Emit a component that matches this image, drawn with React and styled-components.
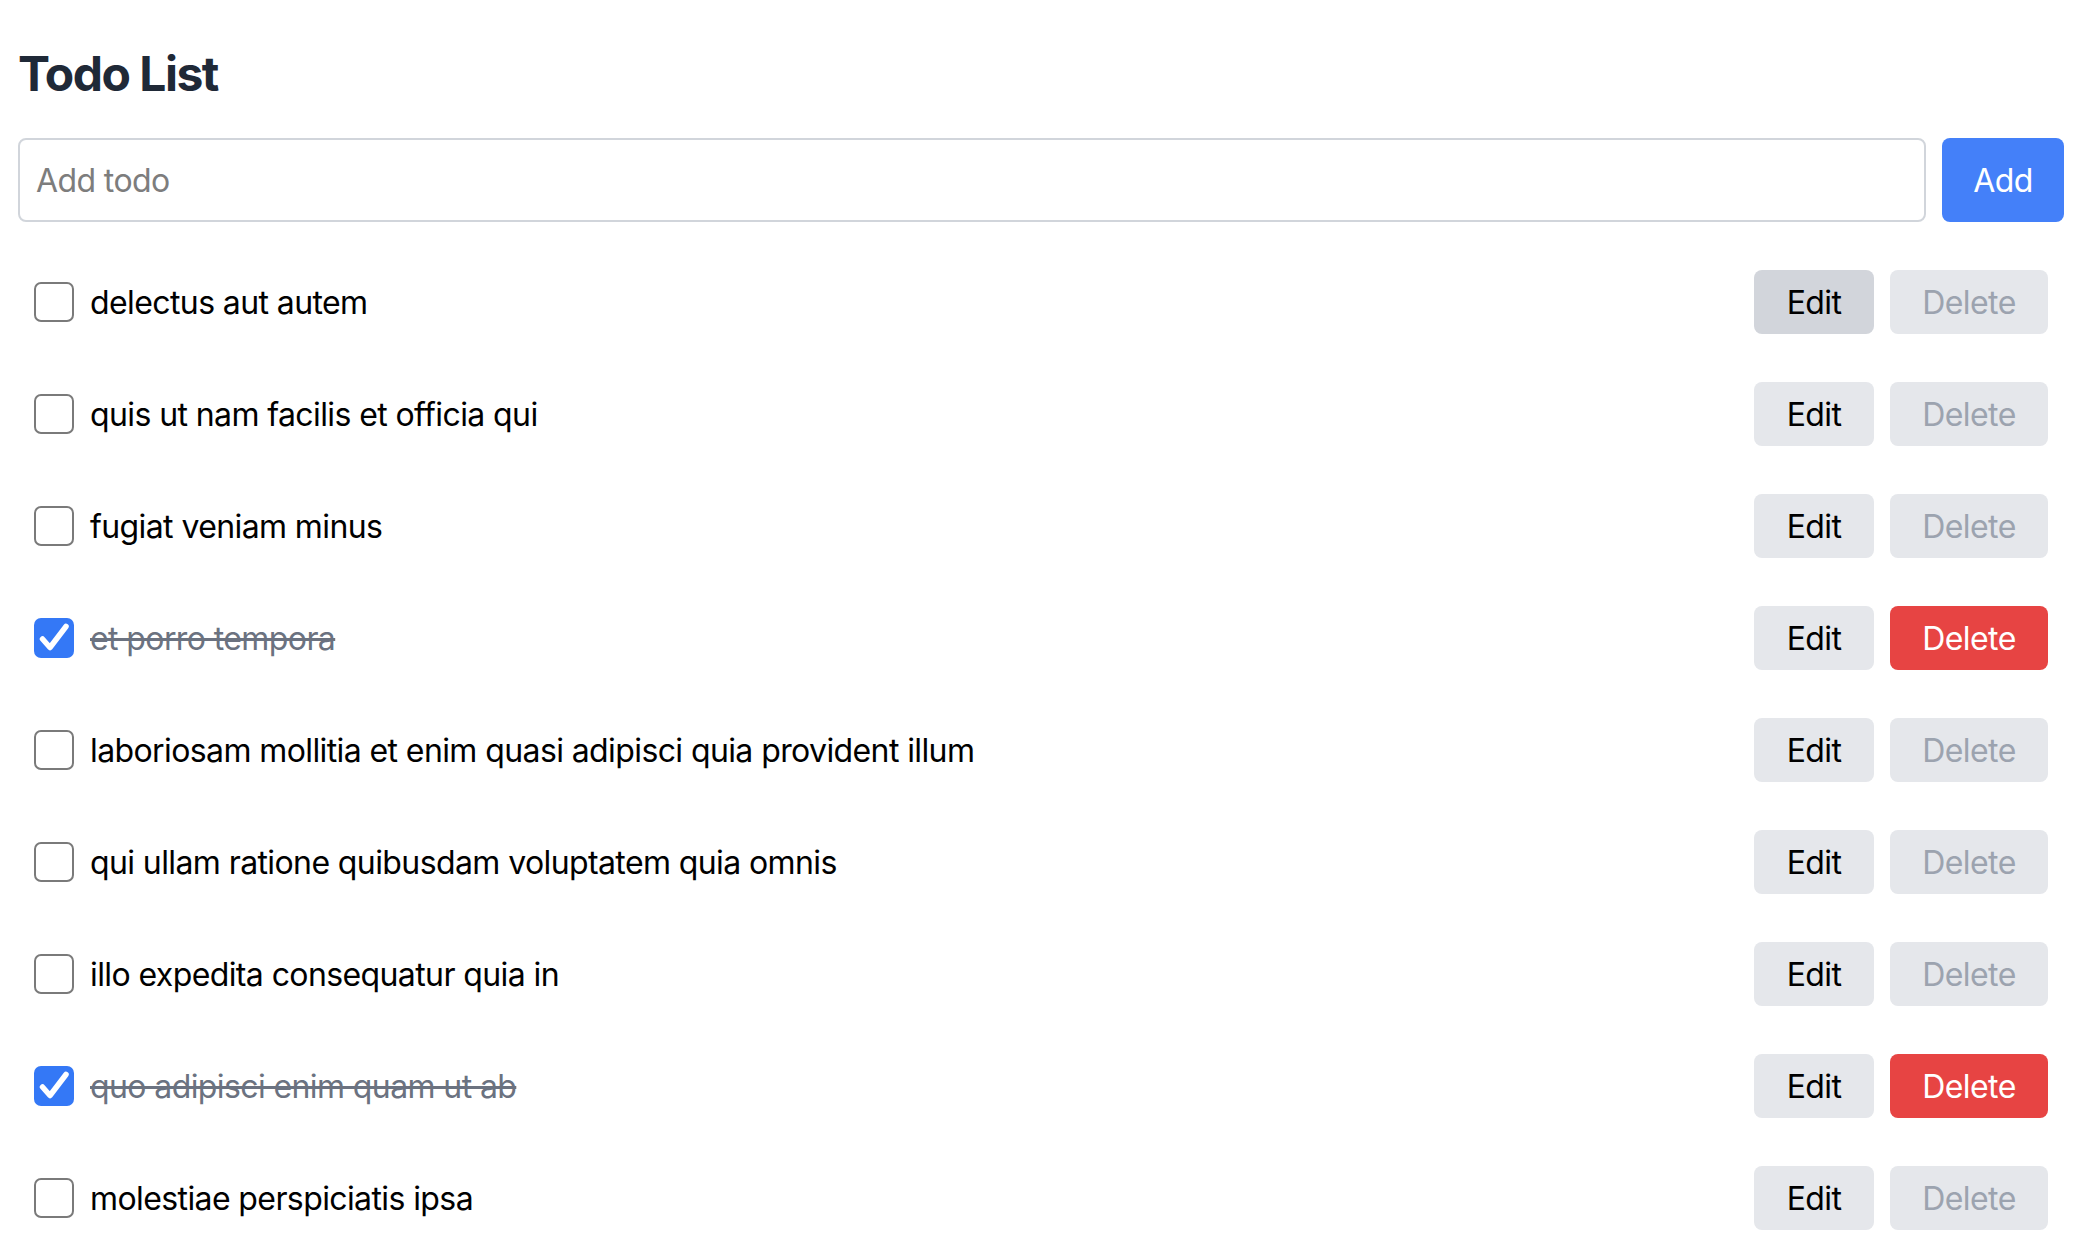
import React, { useState } from "react";
import styled, { createGlobalStyle } from "styled-components";

const GlobalStyle = createGlobalStyle`
  html, body { margin: 0; padding: 0; background: #ffffff; }
  body { font-family: Inter, "Noto Sans", "Liberation Sans", sans-serif; color: #000; }
  * { box-sizing: border-box; }
`;

const Page = styled.div`
  padding: 42px 20px 0 18px;
`;

const Title = styled.h1`
  margin: 0 0 32px;
  font-size: 48px;
  line-height: 64px;
  font-weight: 700;
  color: #1f2937;
  letter-spacing: -1.5px;
`;

const Form = styled.form`
  display: flex;
  gap: 16px;
  margin: 0 0 24px;
`;

const TextInput = styled.input`
  flex: 1;
  height: 84px;
  border: 2px solid #d1d5db;
  border-radius: 8px;
  padding: 0 16px;
  font-family: inherit;
  font-size: 32px;
  letter-spacing: -0.6px;
  color: #000;
  outline: none;
  &::placeholder { color: #7d7d7d; }
`;

const AddButton = styled.button`
  width: 122px;
  height: 84px;
  border: none;
  border-radius: 8px;
  background: #4480f9;
  color: #fff;
  font-family: inherit;
  font-size: 32px;
  letter-spacing: -0.6px;
  cursor: pointer;
`;

const List = styled.ul`
  list-style: none;
  margin: 0;
  padding: 0;
`;

const Row = styled.li`
  height: 112px;
  padding: 0 16px;
  display: flex;
  align-items: center;
  justify-content: space-between;
`;

const Left = styled.label`
  display: flex;
  align-items: center;
  gap: 16px;
  cursor: pointer;
`;

const Box = styled.span`
  width: 40px;
  height: 40px;
  border-radius: 7px;
  display: flex;
  align-items: center;
  justify-content: center;
  flex-shrink: 0;
  border: ${(p) => (p.$checked ? "none" : "2px solid #7a7a7a")};
  background: ${(p) => (p.$checked ? "#3478f6" : "#fff")};
`;

const Label = styled.span`
  font-size: 32px;
  line-height: 48px;
  letter-spacing: -0.6px;
  padding-top: 2px;
  color: ${(p) => (p.$done ? "#6b7280" : "#000")};
  text-decoration: ${(p) => (p.$done ? "line-through" : "none")};
  text-decoration-thickness: 3px;
`;

const Actions = styled.div`
  display: flex;
  gap: 16px;
`;

const Btn = styled.button`
  height: 64px;
  padding: 0;
  border: none;
  border-radius: 8px;
  font-family: inherit;
  font-size: 32px;
  letter-spacing: -0.6px;
  cursor: pointer;
`;

const EditBtn = styled(Btn)`
  width: 120px;
  background: ${(p) => (p.$hover ? "#d2d5db" : "#e5e7eb")};
  color: #000;
`;

const DeleteBtn = styled(Btn)`
  width: 158px;
  background: ${(p) => (p.disabled ? "#e5e7eb" : "#e74443")};
  color: ${(p) => (p.disabled ? "#9ca3af" : "#fff")};
  cursor: ${(p) => (p.disabled ? "not-allowed" : "pointer")};
`;

const Check = () => (
  <svg width="40" height="40" viewBox="0 0 40 40" fill="none">
    <path d="M8.5 21l7.5 8.5L32 8.5" stroke="#fff" strokeWidth="5.5" strokeLinecap="round" strokeLinejoin="round" />
  </svg>
);

const initial = [
  { id: 1, title: "delectus aut autem", done: false },
  { id: 2, title: "quis ut nam facilis et officia qui", done: false },
  { id: 3, title: "fugiat veniam minus", done: false },
  { id: 4, title: "et porro tempora", done: true },
  { id: 5, title: "laboriosam mollitia et enim quasi adipisci quia provident illum", done: false },
  { id: 6, title: "qui ullam ratione quibusdam voluptatem quia omnis", done: false },
  { id: 7, title: "illo expedita consequatur quia in", done: false },
  { id: 8, title: "quo adipisci enim quam ut ab", done: true },
  { id: 9, title: "molestiae perspiciatis ipsa", done: false },
];

export default function App() {
  const [todos, setTodos] = useState(initial);
  const [text, setText] = useState("");

  const toggle = (id) =>
    setTodos((t) => t.map((x) => (x.id === id ? { ...x, done: !x.done } : x)));
  const remove = (id) => setTodos((t) => t.filter((x) => x.id !== id));
  const add = (e) => {
    e.preventDefault();
    if (!text.trim()) return;
    setTodos((t) => [...t, { id: Date.now(), title: text.trim(), done: false }]);
    setText("");
  };

  return (
    <>
      <GlobalStyle />
      <Page>
        <Title>Todo List</Title>
        <Form onSubmit={add}>
          <TextInput
            placeholder="Add todo"
            value={text}
            onChange={(e) => setText(e.target.value)}
          />
          <AddButton type="submit">Add</AddButton>
        </Form>
        <List>
          {todos.map((t, i) => (
            <Row key={t.id}>
              <Left onClick={() => toggle(t.id)}>
                <Box $checked={t.done}>{t.done && <Check />}</Box>
                <Label $done={t.done}>{t.title}</Label>
              </Left>
              <Actions>
                <EditBtn $hover={i === 0}>Edit</EditBtn>
                <DeleteBtn disabled={!t.done} onClick={() => remove(t.id)}>
                  Delete
                </DeleteBtn>
              </Actions>
            </Row>
          ))}
        </List>
      </Page>
    </>
  );
}
